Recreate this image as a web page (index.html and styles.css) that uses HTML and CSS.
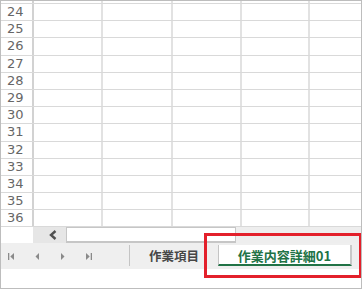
FILE: index.html
```html
<!DOCTYPE html>
<html lang="ja">
<head>
<meta charset="utf-8">
<link rel="stylesheet" href="styles.css">
</head>
<body>
<div class="frame">
  <div class="grid">
    <div class="row partial"><div class="hdr"></div><div class="c c1"></div><div class="c c2"></div><div class="c c3"></div><div class="c c4"></div><div class="c c5"></div></div>
    <div class="row"><div class="hdr">24</div><div class="c c1"></div><div class="c c2"></div><div class="c c3"></div><div class="c c4"></div><div class="c c5"></div></div>
    <div class="row"><div class="hdr">25</div><div class="c c1"></div><div class="c c2"></div><div class="c c3"></div><div class="c c4"></div><div class="c c5"></div></div>
    <div class="row"><div class="hdr">26</div><div class="c c1"></div><div class="c c2"></div><div class="c c3"></div><div class="c c4"></div><div class="c c5"></div></div>
    <div class="row"><div class="hdr">27</div><div class="c c1"></div><div class="c c2"></div><div class="c c3"></div><div class="c c4"></div><div class="c c5"></div></div>
    <div class="row"><div class="hdr">28</div><div class="c c1"></div><div class="c c2"></div><div class="c c3"></div><div class="c c4"></div><div class="c c5"></div></div>
    <div class="row"><div class="hdr">29</div><div class="c c1"></div><div class="c c2"></div><div class="c c3"></div><div class="c c4"></div><div class="c c5"></div></div>
    <div class="row"><div class="hdr">30</div><div class="c c1"></div><div class="c c2"></div><div class="c c3"></div><div class="c c4"></div><div class="c c5"></div></div>
    <div class="row"><div class="hdr">31</div><div class="c c1"></div><div class="c c2"></div><div class="c c3"></div><div class="c c4"></div><div class="c c5"></div></div>
    <div class="row"><div class="hdr">32</div><div class="c c1"></div><div class="c c2"></div><div class="c c3"></div><div class="c c4"></div><div class="c c5"></div></div>
    <div class="row"><div class="hdr">33</div><div class="c c1"></div><div class="c c2"></div><div class="c c3"></div><div class="c c4"></div><div class="c c5"></div></div>
    <div class="row"><div class="hdr">34</div><div class="c c1"></div><div class="c c2"></div><div class="c c3"></div><div class="c c4"></div><div class="c c5"></div></div>
    <div class="row"><div class="hdr">35</div><div class="c c1"></div><div class="c c2"></div><div class="c c3"></div><div class="c c4"></div><div class="c c5"></div></div>
    <div class="row"><div class="hdr">36</div><div class="c c1"></div><div class="c c2"></div><div class="c c3"></div><div class="c c4"></div><div class="c c5"></div></div>
  </div>
  <div class="scrollrow">
    <div class="scroll-spacer"></div>
    <div class="scroll-btn">
      <svg width="8" height="10" viewBox="0 0 8 10"><polyline points="6.5,1 2,5 6.5,9" fill="none" stroke="#505050" stroke-width="2.4"/></svg>
    </div>
    <div class="scroll-track"></div>
    <div class="scroll-rest"></div>
  </div>
  <div class="tabbar">
    <div class="nav">
      <div class="nav-btn"><svg width="7" height="7" viewBox="0 0 7 7"><rect x="0" y="0" width="1.3" height="7" fill="#8a8a8a"/><polygon points="6,0 2.3,3.5 6,7" fill="#8a8a8a"/></svg></div>
      <div class="nav-btn"><svg width="5" height="7" viewBox="0 0 5 7"><polygon points="4,0 0.5,3.5 4,7" fill="#8a8a8a"/></svg></div>
      <div class="nav-btn"><svg width="5" height="7" viewBox="0 0 5 7"><polygon points="1,0 4.5,3.5 1,7" fill="#8a8a8a"/></svg></div>
      <div class="nav-btn"><svg width="7" height="7" viewBox="0 0 7 7"><polygon points="1,0 4.7,3.5 1,7" fill="#8a8a8a"/><rect x="5.7" y="0" width="1.3" height="7" fill="#8a8a8a"/></svg></div>
    </div>
    <div class="tab">作業項目</div>
    <div class="tab active">作業内容詳細01</div>
  </div>
  <div class="footer"></div>
  <div class="highlight"></div>
</div>
</body>
</html>
```
FILE: styles.css
```css
* { box-sizing: border-box; }
html, body { margin: 0; padding: 0; background: #fff; }
.frame {
  position: relative;
  width: 362px;
  height: 289px;
  border: 1px solid #bdbdbd;
  display: flex;
  flex-direction: column;
  overflow: hidden;
  font-family: "DejaVu Sans", sans-serif;
}
.grid { display: flex; flex-direction: column; }
.row {
  display: flex;
  height: 17.2px;
  border-bottom: 1px solid #d9d9d9;
  flex: none;
}
.row.partial { height: 3px; }
.hdr {
  width: 33px;
  border-right: 2px solid #d2d2d2;
  font-size: 13px;
  color: #666;
  padding-left: 6px;
  line-height: 16px;
}
.c { border-right: 2px solid #e2e2e2; }
.c1 { width: 69px; }
.c2 { width: 70px; }
.c3 { width: 69px; }
.c4 { width: 68px; }
.c5 { flex: 1; border-right: none; }
.scrollrow { display: flex; height: 16px; flex: none; }
.scroll-spacer { width: 32px; background: #fff; }
.scroll-btn {
  width: 33px;
  background: #e6e6e6;
  display: flex;
  align-items: center;
  justify-content: center;
  padding-left: 7px;
}
.scroll-track {
  width: 170px;
  background: #fff;
  border: 1px solid #c6c6c6;
  border-bottom-width: 2px;
}
.scroll-rest { flex: 1; background: #eeeeee; }
.tabbar {
  height: 26px;
  background: #efefef;
  display: flex;
  align-items: stretch;
  flex: none;
}
.nav { display: flex; margin-left: -2px; width: 102px; align-items: center; }
.nav-btn { width: 25.5px; display: flex; justify-content: center; align-items: center; }
.tab {
  font-family: "Noto Sans CJK JP", sans-serif;
  font-size: 12.5px;
  font-weight: bold;
  color: #474747;
  display: flex;
  align-items: center;
  justify-content: center;
  margin: 2px 0 3px;
}
.tab:not(.active) {
  margin-left: 28px;
  width: 89px;
  border-left: 1px solid #c4c4c4;
}
.tab.active {
  width: 134px;
  background: #fff;
  color: #217346;
  font-size: 13px;
  border-left: 1px solid #c4c4c4;
  border-right: 2px solid #c8c8c8;
  border-bottom: 2px solid #217346;
  padding-top: 1px;
}
.footer { flex: 1; background: #fff; }
.highlight {
  position: absolute;
  left: 203px;
  top: 232px;
  width: 158px;
  height: 45px;
  border: 3px solid #e3202b;
}
```
